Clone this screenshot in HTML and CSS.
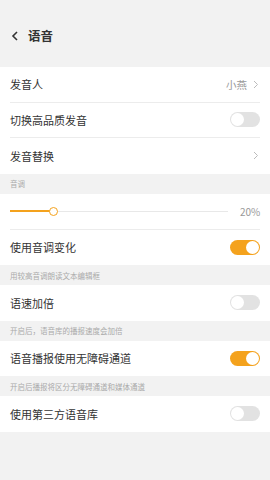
FILE: index.html
```html
<!DOCTYPE html>
<html>
<head>
<meta charset="utf-8">
<link rel="stylesheet" href="styles.css">
</head>
<body>
<div class="page">
  <header class="header">
    <svg class="back" width="8" height="10" viewBox="0 0 8 10"><path d="M6 1 L2 5 L6 9" fill="none" stroke="#333" stroke-width="1.6"/></svg>
    <span class="title">语音</span>
  </header>
  <section class="group">
    <div class="row bordered"><span class="label">发音人</span><span class="value">小燕</span><svg class="chev" width="6" height="9" viewBox="0 0 6 9"><path d="M1 1 L4.5 4.5 L1 8" fill="none" stroke="#bbb" stroke-width="1"/></svg></div>
    <div class="row bordered"><span class="label">切换高品质发音</span><span class="toggle"></span></div>
    <div class="row"><span class="label">发音替换</span><svg class="chev" width="6" height="9" viewBox="0 0 6 9"><path d="M1 1 L4.5 4.5 L1 8" fill="none" stroke="#bbb" stroke-width="1"/></svg></div>
  </section>
  <div class="note">音调</div>
  <section class="group">
    <div class="row slider-row bordered">
      <div class="slider"><div class="fill" style="width:20%"></div><div class="thumb" style="left:20%"></div></div>
      <span class="pct">20%</span>
    </div>
    <div class="row"><span class="label">使用音调变化</span><span class="toggle on"></span></div>
  </section>
  <div class="note">用较高音调朗读文本编辑框</div>
  <section class="group">
    <div class="row"><span class="label">语速加倍</span><span class="toggle"></span></div>
  </section>
  <div class="note">开启后，语音库的播报速度会加倍</div>
  <section class="group">
    <div class="row"><span class="label">语音播报使用无障碍通道</span><span class="toggle on"></span></div>
  </section>
  <div class="note">开启后播报将区分无障碍通道和媒体通道</div>
  <section class="group">
    <div class="row"><span class="label">使用第三方语音库</span><span class="toggle"></span></div>
  </section>
</div>
</body>
</html>
```
FILE: styles.css
```css
* { box-sizing: border-box; }
html, body { margin: 0; padding: 0; }
body {
  width: 270px; height: 480px; overflow: hidden;
  background: #f2f2f2;
  font-family: "Noto Sans CJK SC", "Noto Sans", sans-serif;
  color: #333;
}
.header {
  height: 67px;
  display: flex; align-items: center;
  padding: 4px 0 0 11px;
  background: #f2f2f2;
}
.back { margin-right: 9px; }
.title { font-size: 12.5px; font-weight: bold; color: #333; }
.group { background: #fff; }
.row {
  height: 35.5px;
  display: flex; align-items: center;
  margin: 0 10px;
}
.bordered { border-bottom: 1px solid #ececec; }
.label { flex: 1; font-size: 11px; color: #333; }
.value { font-size: 10.5px; color: #999; margin-right: 6px; }
.chev { margin-right: 1px; }
.toggle {
  width: 30px; height: 15px; border-radius: 8px;
  background: #e2e2e2; position: relative;
}
.toggle::after {
  content: ""; position: absolute; top: 1px; left: 1px;
  width: 13px; height: 13px; border-radius: 50%; background: #fff;
}
.toggle.on { background: #f4a21d; }
.toggle.on::after { left: 16px; }
.note {
  height: 20px; display: flex; align-items: center;
  padding-left: 10px; font-size: 7.5px; color: #aaa;
}
.slider-row { height: 36px; }
.slider { flex: 1; height: 1px; background: #e8e8e8; position: relative; margin-right: 12px; }
.fill { position: absolute; left: 0; top: -0.5px; height: 2px; background: #f4a21d; }
.thumb {
  position: absolute; top: -4px; width: 9px; height: 9px; margin-left: -4.5px;
  border-radius: 50%; background: #fff; border: 1.5px solid #f4a21d;
}
.pct { font-size: 10px; color: #999; width: 20px; text-align: right; }
```
